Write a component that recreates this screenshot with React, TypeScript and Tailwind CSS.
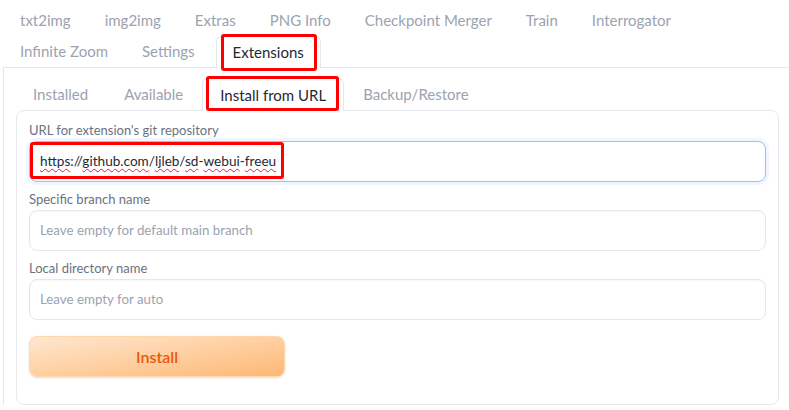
import React from 'react';

const topRow1 = ['txt2img', 'img2img', 'Extras', 'PNG Info', 'Checkpoint Merger', 'Train', 'Interrogator'];
const topRow2 = ['Infinite Zoom', 'Settings'];
const subTabs = ['Installed', 'Available'];

function RedBox({ className }: { className: string }) {
  return <div className={`pointer-events-none absolute rounded-[3px] border-[3px] border-[#ff0000] ${className}`} />;
}

function Tab({ label }: { label: string }) {
  return <div className="flex h-full items-center px-[17px] text-[15px] text-[#9ca3af]">{label}</div>;
}

function Field({ label, placeholder }: { label: string; placeholder: string }) {
  return (
    <div className="flex flex-col">
      <label className="text-[13px] leading-[20px] text-[#6b7280]">{label}</label>
      <div className="mt-px flex h-[41px] items-center rounded-lg border border-[#e5e7eb] bg-white px-[10px] text-[13.3px] text-[#9ca3af] shadow-[inset_0_1px_2px_rgba(0,0,0,0.04)]">
        {placeholder}
      </div>
    </div>
  );
}

const wavy = 'underline decoration-[#e11d48] decoration-wavy decoration-1 underline-offset-2';

export default function App() {
  return (
    <div className="h-[410px] w-[789px] overflow-hidden bg-white pt-[4px] font-['Lato',sans-serif]">
      {/* Main tabs */}
      <div className="flex h-[32px] pl-[3px]">
        {topRow1.map((t) => (
          <Tab key={t} label={t} />
        ))}
      </div>
      <div className="flex h-[31px] pl-[3px]">
        {topRow2.map((t) => (
          <Tab key={t} label={t} />
        ))}
        <div className="relative z-10 -mb-px ml-[4px] flex h-[32px] items-center rounded-t-md border border-b-0 border-[#e5e7eb] bg-white px-[16px] text-[15px] text-[#1f2937]">
          Extensions
          <RedBox className="-top-[3px] left-[4px] right-[3px] -bottom-[3px]" />
        </div>
      </div>

      {/* Outer panel */}
      <div className="ml-[3px] w-[800px] border-l border-t border-[#e5e7eb] pl-3 pr-[24px] pt-[10px]">
        <div className="flex h-[32px]">
          <Tab label="Installed" />
          <div className="flex h-full items-center px-[19px] text-[15px] text-[#9ca3af]">Available</div>
          <div className="relative z-10 -mb-px flex h-[33px] items-center rounded-t-md border border-b-0 border-[#e5e7eb] bg-white px-[17px] text-[15px] text-[#1f2937]">
            Install from URL
            <RedBox className="-top-[3px] left-[3px] right-[4px] bottom-0" />
          </div>
          <div className="flex h-full items-center px-[19px] text-[15px] text-[#9ca3af]">Backup/Restore</div>
        </div>

        <div className="flex h-[295px] w-[763px] flex-col gap-[7px] rounded-lg border border-[#e5e7eb] bg-white px-3 pt-[9px]">
          <div className="flex flex-col">
            <label className="text-[13px] leading-[20px] text-[#6b7280]">URL for extension's git repository</label>
            <div className="relative mt-px flex h-[41px] items-center rounded-lg border border-[#93c5fd] bg-white px-[10px] text-[13.6px] text-[#1f2937] shadow-[0_0_0_3px_#eff6ff]">
              <span>
                <span className={wavy}>https</span>://<span className={wavy}>github.com</span>/<span className={wavy}>ljleb</span>/<span className={wavy}>sd</span>-<span className={wavy}>webui</span>-<span className={wavy}>freeu</span>
              </span>
              <RedBox className="left-0 top-0 h-[37px] w-[254px]" />
            </div>
          </div>
          <Field label="Specific branch name" placeholder="Leave empty for default main branch" />
          <Field label="Local directory name" placeholder="Leave empty for auto" />
          <button className="mt-[9px] h-[41px] w-[256px] rounded-lg border border-[#fed7aa] bg-gradient-to-br from-[#fee7cf] to-[#fdb873] text-[16px] font-semibold text-[#ea580c] shadow-sm">
            Install
          </button>
        </div>
      </div>
    </div>
  );
}
